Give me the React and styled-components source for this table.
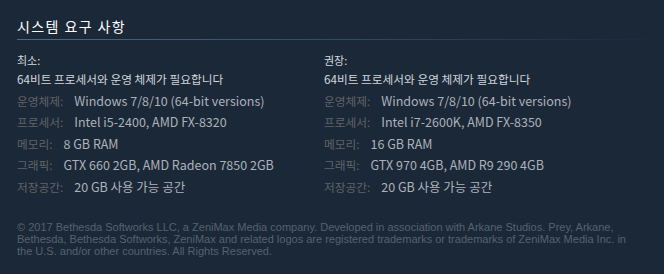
import React from "react";
import styled, { createGlobalStyle } from "styled-components";

const GlobalStyle = createGlobalStyle`
  html, body {
    margin: 0;
    padding: 0;
    background: #1b2838;
  }
`;

const minimum = {
  title: "최소:",
  note: "64비트 프로세서와 운영 체제가 필요합니다",
  rows: [
    ["운영체제:", "Windows 7/8/10 (64-bit versions)"],
    ["프로세서:", "Intel i5-2400, AMD FX-8320"],
    ["메모리:", "8 GB RAM"],
    ["그래픽:", "GTX 660 2GB, AMD Radeon 7850 2GB"],
    ["저장공간:", "20 GB 사용 가능 공간"],
  ],
};

const recommended = {
  title: "권장:",
  note: "64비트 프로세서와 운영 체제가 필요합니다",
  rows: [
    ["운영체제:", "Windows 7/8/10 (64-bit versions)"],
    ["프로세서:", "Intel i7-2600K, AMD FX-8350"],
    ["메모리:", "16 GB RAM"],
    ["그래픽:", "GTX 970 4GB, AMD R9 290 4GB"],
    ["저장공간:", "20 GB 사용 가능 공간"],
  ],
};

const Requirements = ({ data }) => {
  return (
    <Column>
      <ColTitle>{data.title}</ColTitle>
      <List>
        <Note>{data.note}</Note>
        {data.rows.map((r) => (
          <Row key={r[0]}>
            <Label>{r[0]}</Label>
            <Value>{r[1]}</Value>
          </Row>
        ))}
      </List>
    </Column>
  );
};

const App = () => {
  return (
    <Page>
      <GlobalStyle />
      <Title>시스템 요구 사항</Title>
      <Columns>
        <Requirements data={minimum} />
        <Requirements data={recommended} />
      </Columns>
      <Legal>
        © 2017 Bethesda Softworks LLC, a ZeniMax Media company. Developed in
        association with Arkane Studios. Prey, Arkane, Bethesda, Bethesda
        Softworks, ZeniMax and related logos are registered trademarks or
        trademarks of ZeniMax Media Inc. in the U.S. and/or other countries.
        All Rights Reserved.
      </Legal>
    </Page>
  );
};

const Page = styled.div`
  padding-left: 17px;
  height: 274px;
  box-sizing: border-box;
  background: #1b2838;
  font-family: "Noto Sans CJK KR", sans-serif;
`;

const Title = styled.h2`
  margin: 0;
  padding: 16px 0 4px 0;
  font-size: 14px;
  line-height: 20px;
  font-weight: normal;
  letter-spacing: 1.4px;
  color: #ffffff;
  background: linear-gradient(to right, #3f6e8c 0%, #2e4d63 50%, rgba(27, 40, 56, 0) 100%)
    no-repeat left bottom / 100% 1px;
`;

const Columns = styled.div`
  display: grid;
  grid-template-columns: 307px 1fr;
  margin-top: 12px;
`;

const Column = styled.div`
  display: flex;
  flex-direction: column;
`;

const ColTitle = styled.div`
  font-size: 11px;
  line-height: 16px;
  color: #d2d9df;
`;

const List = styled.ul`
  list-style: none;
  margin: 0;
  padding: 0;
  line-height: 21.5px;
`;

const Note = styled.li`
  font-size: 11.7px;
  color: #d0d6db;
`;

const Row = styled.li`
  display: flex;
  align-items: baseline;
  white-space: nowrap;
`;

const Label = styled.span`
  font-size: 11.7px;
  margin-right: 11px;
  color: #626366;
`;

const Value = styled.span`
  font-size: 12.5px;
  color: #acb2b8;
`;

const Legal = styled.div`
  margin-top: 24px;
  width: 612px;
  font-family: "Liberation Sans", Arial, sans-serif;
  font-size: 11px;
  line-height: 12px;
  color: #58626d;
`;

export default App;
